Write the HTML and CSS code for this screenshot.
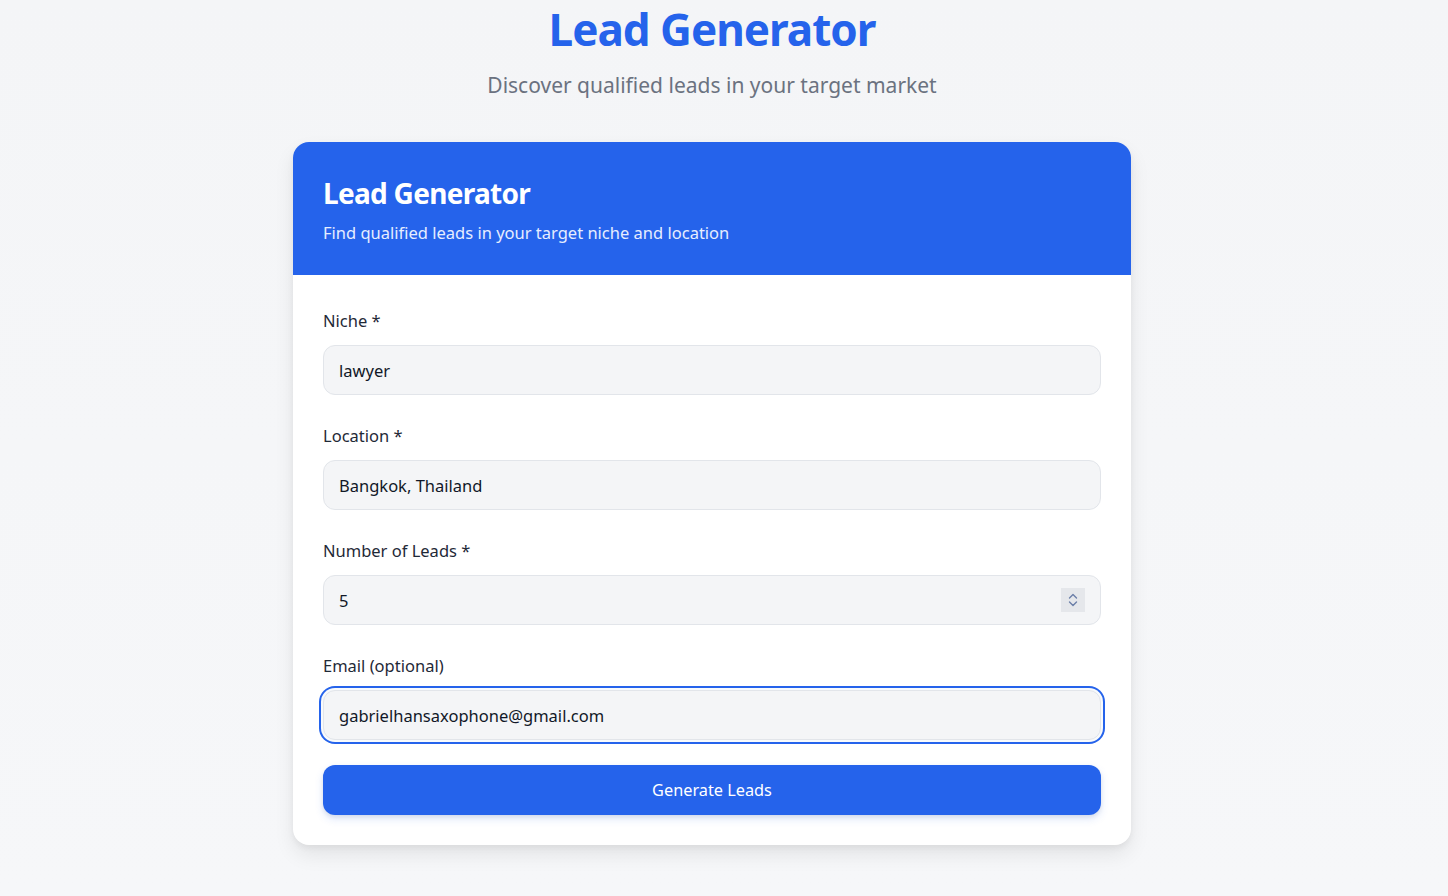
FILE: index.html
```html
<!DOCTYPE html>
<html lang="en">
<head>
    <meta charset="UTF-8">
    <meta name="viewport" content="width=device-width, initial-scale=1.0">
    <title>Lead Generator</title>
    <link rel="stylesheet" href="styles.css">
</head>
<body>
    <div class="page">
        <header class="page-header">
            <h1>Lead Generator</h1>
            <p>Discover qualified leads in your target market</p>
        </header>

        <div class="card">
            <div class="card-header">
                <h2>Lead Generator</h2>
                <p>Find qualified leads in your target niche and location</p>
            </div>

            <form class="card-body">
                <div class="field">
                    <label for="niche">Niche *</label>
                    <input type="text" id="niche" value="lawyer">
                </div>

                <div class="field">
                    <label for="location">Location *</label>
                    <input type="text" id="location" value="Bangkok, Thailand">
                </div>

                <div class="field">
                    <label for="count">Number of Leads *</label>
                    <div class="number-wrap">
                        <input type="text" id="count" value="5">
                        <span class="spinner">
                            <svg width="12" height="18" viewBox="0 0 12 18" fill="none" stroke="#6b7fa8" stroke-width="1.4" stroke-linecap="round" stroke-linejoin="round">
                                <path d="M2.5 7 L6 3.5 L9.5 7"/>
                                <path d="M2.5 11 L6 14.5 L9.5 11"/>
                            </svg>
                        </span>
                    </div>
                </div>

                <div class="field">
                    <label for="email">Email (optional)</label>
                    <input type="email" id="email" class="focused" value="gabrielhansaxophone@gmail.com">
                </div>

                <button type="button">Generate Leads</button>
            </form>
        </div>
    </div>
</body>
</html>
```

FILE: styles.css
```css
* {
    margin: 0;
    padding: 0;
    box-sizing: border-box;
}

body {
    font-family: 'Noto Sans', 'Open Sans', sans-serif;
    background: linear-gradient(180deg, #f4f5f7 0%, #f6f7f9 100%);
    min-height: 100vh;
    padding-right: 24px;
    color: #1f2937;
}

.page {
    max-width: 838px;
    margin: 0 auto;
}

.page-header {
    text-align: center;
    margin-bottom: 42px;
}

.page-header h1 {
    font-size: 44px;
    line-height: 58px;
    font-weight: 700;
    color: #2563eb;
    letter-spacing: -1px;
}

.page-header p {
    margin-top: 12px;
    font-size: 21px;
    line-height: 30px;
    color: #6b7280;
}

.card {
    background: #fff;
    border-radius: 16px;
    overflow: hidden;
    box-shadow: 0 10px 20px rgba(0, 0, 0, 0.08), 0 3px 6px rgba(0, 0, 0, 0.05);
}

.card-header {
    background: #2563eb;
    color: #fff;
    padding: 32px 30px 30px;
    height: 133px;
}

.card-header h2 {
    font-size: 28px;
    line-height: 38px;
    font-weight: 700;
    letter-spacing: -0.7px;
}

.card-header p {
    margin-top: 9px;
    font-size: 16.5px;
    line-height: 24px;
    color: #e6edff;
}

.card-body {
    padding: 33px 30px 30px;
    display: flex;
    flex-direction: column;
    gap: 28px;
}

.field {
    display: flex;
    flex-direction: column;
    gap: 11px;
}

label {
    font-size: 16.5px;
    line-height: 26px;
    color: #1f2937;
}

input {
    width: 100%;
    height: 50px;
    padding: 0 15px;
    font-family: inherit;
    font-size: 16.5px;
    color: #111827;
    background: #f4f5f7;
    border: 1px solid #e2e5ea;
    border-radius: 12px;
    outline: none;
}

input.focused {
    box-shadow: 0 0 0 2px #f8fafc, 0 0 0 4px #2563eb;
}

.number-wrap {
    position: relative;
}

.spinner {
    position: absolute;
    right: 16px;
    top: 13px;
    width: 24px;
    height: 24px;
    background: #e5e7eb;
    display: flex;
    align-items: center;
    justify-content: center;
}

button {
    margin-top: -3px;
    height: 50px;
    border: none;
    border-radius: 12px;
    background: #2563eb;
    color: #fff;
    font-family: inherit;
    font-size: 16.3px;
    cursor: pointer;
    box-shadow: 0 4px 8px rgba(37, 99, 235, 0.15), 0 2px 4px rgba(0, 0, 0, 0.08);
}
```
